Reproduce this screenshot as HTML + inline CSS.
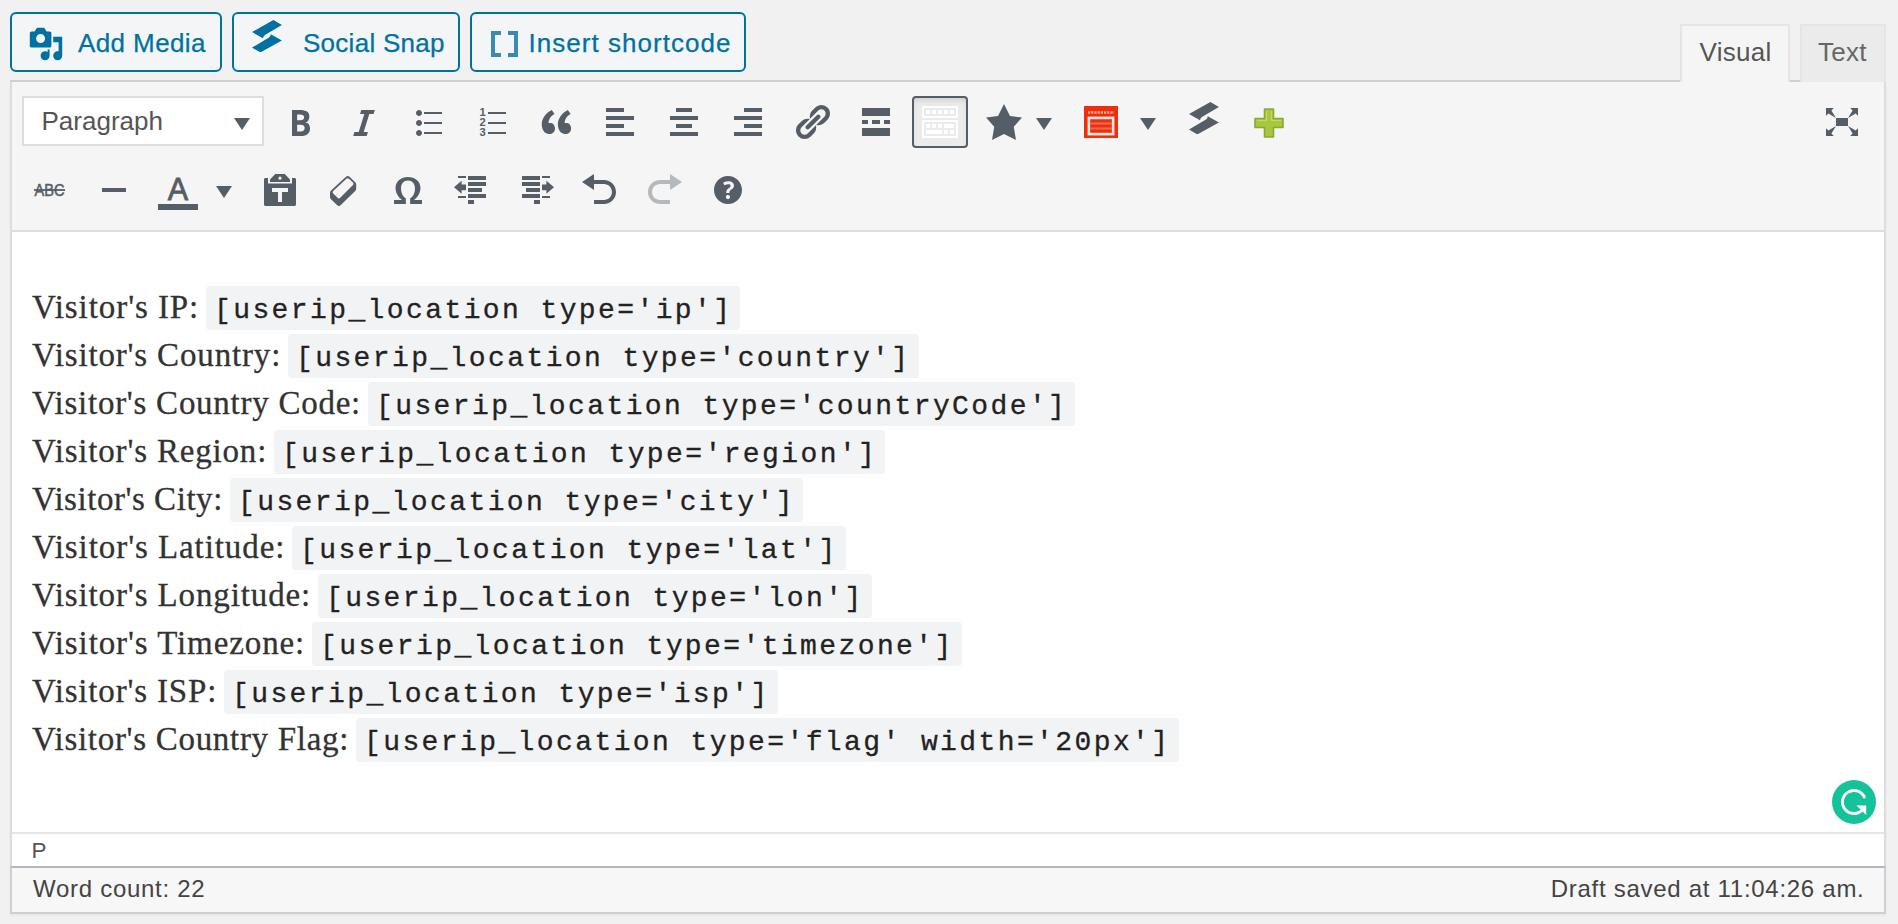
<!DOCTYPE html>
<html lang="en">
<head>
<meta charset="utf-8">
<title>Edit Post</title>
<style>
*{box-sizing:border-box;margin:0;padding:0}
html,body{width:1898px;height:924px;overflow:hidden;background:#f1f1f1;font-family:"Liberation Sans",sans-serif;color:#444}
.abs{position:absolute}
/* media buttons */
.mbtn{position:absolute;top:12px;height:60px;border:2px solid #0071a1;border-radius:6px;background:#f3f5f6;color:#0071a1;font-size:26px;line-height:56px;white-space:nowrap}
.mbtn span{position:absolute;top:0;-webkit-text-stroke:.25px #0071a1}
.mbtn svg{position:absolute}
/* tabs */
.tab{position:absolute;top:24px;height:58px;border:2px solid #e5e5e5;border-bottom:none;font-size:26px;line-height:53px;white-space:nowrap}
.tab span{position:absolute;top:0}
/* editor container */
#tools-line{position:absolute;left:10px;top:80px;width:1876px;height:2px;background:#ccd0d4}
#container{position:absolute;left:10px;top:82px;width:1876px;height:786px;border-left:2px solid #ddd;border-right:2px solid #ddd;background:#fff;box-shadow:0 2px 2px rgba(0,0,0,.04)}
#toolbar{position:absolute;left:0;top:0;width:1872px;height:150px;background:#f5f5f5;border-bottom:2px solid #ddd}
.ico{position:absolute;width:40px;height:40px;fill:#555d66}
.active{position:absolute;width:56px;height:52px;border:2px solid #555d66;border-radius:4px;background:#ebebeb;box-shadow:inset 0 4px 10px -6px rgba(0,0,0,.3)}
.caret{position:absolute;width:0;height:0;border-left:8px solid transparent;border-right:8px solid transparent;border-top:12px solid #555d66}
#fmt{position:absolute;left:10px;top:14px;width:242px;height:50px;border:2px solid #ddd;background:#fff}
#fmt span{position:absolute;left:17.5px;top:0;font-size:26px;line-height:46px;color:#555;white-space:nowrap}
#content{position:absolute;left:0;top:150px;width:1872px;height:600px;background:#fff;font-family:"Liberation Serif",serif;color:#333}
.ln{position:absolute;left:20px;height:48px;line-height:48px;white-space:nowrap;font-size:33px}
.ln .lbl{-webkit-text-stroke:.3px #333;display:inline-block;vertical-align:top;height:48px;position:relative;top:-1px}
.ln code{position:absolute;top:2px;height:44px;line-height:49.4px;background:#f2f3f4;border-radius:4px;padding:0 8px;font-family:"Liberation Mono",monospace;font-size:28px;letter-spacing:2.4px;color:#222;-webkit-text-stroke:.3px #222}
#path{position:absolute;left:0;top:750px;width:1872px;height:34px;border-top:2px solid #e5e5e5;background:#fff;font-size:24px;color:#555}
#status{position:absolute;left:10px;top:866px;width:1876px;height:48px;border:2px solid #ccd0d4;border-top:2px solid #b2b8bd;background:#f7f7f7;font-size:24px;color:#444;box-shadow:0 2px 2px rgba(0,0,0,.04)}
#status span{position:absolute;top:0;line-height:42.5px;white-space:nowrap}
</style>
</head>
<body>
<!-- MEDIA BUTTONS -->
<div class="mbtn" style="left:10px;width:212px" id="b1"><svg style="left:16.2px;top:12px;width:36px;height:36px;fill:#0071a1" viewBox="0 0 20 20"><path d="M13 11V4c0-.55-.45-1-1-1h-1.670L9 1H5L3.670 3H2c-.55 0-1 .45-1 1v7c0 .55.45 1 1 1h10c.55 0 1-.45 1-1zM7 4.500c1.380 0 2.500 1.120 2.500 2.500S8.380 9.500 7 9.500 4.500 8.380 4.500 7 5.620 4.500 7 4.500zM14 6h5v10.500c0 1.380-1.120 2.500-2.500 2.500S14 17.880 14 16.500s1.120-2.500 2.500-2.500c.17 0 .34.020.5.050V9h-3V6zM12 13v3.500c0 1.380-1.120 2.500-2.500 2.500S7 17.880 7 16.500 8.120 14 9.500 14c.5 0 1 .15 1.400.420V13z"/></svg><span style="left:66px;top:1px;letter-spacing:.4px">Add Media</span></div>
<div class="mbtn" style="left:232px;width:228px" id="b2"><svg style="left:18.4px;top:5.7px;width:30px;height:32.4px;fill:#0071a1" viewBox="0 0 30 32.400"><path d="M21.400 0L29.900 4.900 12.900 15Q11.300 16 11 18.200L0 12.050zM0 27.600L17 17.500Q18.600 16.500 18.800 14.300L29.900 20.500 8.400 32.400z"/></svg><span style="left:69px;top:1px;letter-spacing:.27px">Social Snap</span></div>
<div class="mbtn" style="left:470px;width:276px" id="b3"><svg style="left:19px;top:17px;width:27px;height:26px;fill:#3a8bb3" viewBox="0 0 27 26"><path d="M0 0h10v4H4v18h6v4H0zM27 0H17v4h6v18h-6v4h10z"/></svg><span style="left:56.5px;top:1px;letter-spacing:1.03px">Insert shortcode</span></div>
<!-- TABS -->
<div id="tools-line"></div>
<div class="tab" style="left:1800px;width:86px;background:#ebebeb;color:#666" id="t2"><span style="left:16px;letter-spacing:.3px">Text</span></div>
<div class="tab" style="left:1680px;width:110px;background:#f5f5f5;color:#555;z-index:3" id="t1"><span style="left:17.5px;letter-spacing:.3px">Visual</span></div>
<!-- EDITOR -->
<div id="container">
  <div id="toolbar">
    <div id="fmt"><span>Paragraph</span><i class="caret" style="left:210px;top:20px"></i></div>
    <svg class="ico" style="left:268px;top:20px" viewBox="0 0 20 20"><path d="M6 4v13h4.54c1.37 0 2.46-.33 3.26-1 .8-.66 1.2-1.58 1.2-2.77 0-.84-.17-1.51-.51-2.01s-.9-.85-1.67-1.03v-.09c.57-.1 1.02-.4 1.36-.9s.51-1.13.51-1.91c0-1.14-.39-1.98-1.17-2.5C12.75 4.26 11.5 4 9.78 4H6zm2.57 5.15V6.26h1.36c.73 0 1.27.11 1.61.32.34.22.51.58.51 1.07 0 .54-.16.92-.47 1.15s-.82.35-1.51.35h-1.5zm0 2.19h1.6c1.44 0 2.16.53 2.16 1.61 0 .6-.17 1.05-.51 1.34s-.86.43-1.57.43H8.57v-3.38z"/></svg>
    <svg class="ico" style="left:332px;top:20px" viewBox="0 0 20 20"><path d="M14.78 6h-2.13l-2.8 9h2.12l-.62 2H4.6l.62-2h2.14l2.8-9H8.03l.62-2h6.75z"/></svg>
    <svg class="ico" style="left:396px;top:20px" viewBox="0 0 20 20"><path d="M5.5 7C4.67 7 4 6.33 4 5.5 4 4.68 4.67 4 5.5 4 6.32 4 7 4.68 7 5.5 7 6.33 6.32 7 5.5 7zM8 5h9v1H8V5zm-2.5 7c-.83 0-1.5-.67-1.5-1.5C4 9.68 4.67 9 5.5 9c.82 0 1.5.68 1.5 1.5 0 .83-.68 1.5-1.5 1.5zM8 10h9v1H8v-1zm-2.5 7c-.83 0-1.5-.67-1.5-1.5 0-.82.67-1.5 1.5-1.5.82 0 1.5.68 1.5 1.5 0 .83-.68 1.5-1.5 1.5zM8 15h9v1H8v-1z"/></svg>
    <svg class="ico" style="left:460px;top:20px" viewBox="0 0 20 20"><path d="M8 5h9v1H8zM8 10h9v1H8zM8 15h9v1H8z"/><g font-family="Liberation Sans" font-weight="bold" font-size="5.6"><text x="3.7" y="7.05">1</text><text x="3.7" y="12.15">2</text><text x="3.7" y="17">3</text></g></svg>
    <svg class="ico" style="left:524px;top:20px" viewBox="0 0 20 20"><path d="M9.49 13.22c0-.74-.2-1.38-.61-1.9-.62-.78-1.83-.88-2.53-.72-.29-1.65 1.11-3.75 2.92-4.65L7.88 4c-2.73 1.3-5.42 4.28-4.96 8.05C3.21 14.43 4.59 16 6.54 16c.85 0 1.56-.25 2.12-.75s.83-1.18.83-2.03zm8.05 0c0-.74-.2-1.38-.61-1.9-.63-.78-1.83-.88-2.53-.72-.29-1.65 1.11-3.75 2.92-4.65L15.93 4c-2.73 1.3-5.41 4.28-4.95 8.05.29 2.38 1.66 3.95 3.61 3.95.85 0 1.56-.25 2.12-.75s.83-1.18.83-2.03z"/></svg>
    <svg class="ico" style="left:588px;top:20px" viewBox="0 0 20 20"><path d="M12 5V3H3v2h9zm5 4V7H3v2h14zm-5 4v-2H3v2h9zm5 4v-2H3v2h14z"/></svg>
    <svg class="ico" style="left:652px;top:20px" viewBox="0 0 20 20"><path d="M14 5V3H6v2h8zm3 4V7H3v2h14zm-3 4v-2H6v2h8zm3 4v-2H3v2h14z"/></svg>
    <svg class="ico" style="left:716px;top:20px" viewBox="0 0 20 20"><path d="M17 5V3H8v2h9zm0 4V7H3v2h14zm0 4v-2H8v2h9zm0 4v-2H3v2h14z"/></svg>
    <svg class="ico" style="left:780px;top:20px" viewBox="0 0 20 20"><path d="M17.74 2.76c1.68 1.69 1.68 4.41 0 6.1l-1.53 1.52c-1.12 1.12-2.7 1.47-4.14 1.09l2.62-2.61.76-.77.76-.76c.84-.84.84-2.2 0-3.04-.84-.85-2.2-.85-3.04 0l-.77.76-3.38 3.38c-.37-1.44-.02-3.02 1.1-4.14l1.52-1.53c1.69-1.68 4.42-1.68 6.1 0zM8.59 13.43l5.34-5.34c.42-.42.42-1.1 0-1.52-.44-.43-1.13-.39-1.53 0l-5.33 5.34c-.42.42-.42 1.1 0 1.52.44.43 1.13.39 1.52 0zm-.76 2.29l4.14-4.15c.38 1.44.03 3.02-1.09 4.14l-1.52 1.53c-1.69 1.68-4.41 1.68-6.1 0-1.68-1.68-1.68-4.42 0-6.1l1.53-1.52c1.12-1.12 2.7-1.47 4.14-1.1l-4.14 4.15c-.85.84-.85 2.2 0 3.05.84.84 2.2.84 3.04 0z"/></svg>
    <svg class="ico" style="left:844px;top:20px" viewBox="0 0 20 20"><path d="M17 7V3H3v4h14zM6 11V9H3v2h3zm6 0V9H8v2h4zm5 0V9h-3v2h3zm0 6v-4H3v4h14z"/></svg>
    <div class="active" style="left:900px;top:14px"></div>
    <svg class="ico" style="left:908px;top:20px" viewBox="0 0 20 20"><path fill="#fff" d="M19 2v6H1V2h18zm-1 5V3H2v4h16zM5 4v2H3V4h2zm3 0v2H6V4h2zm3 0v2H9V4h2zm3 0v2h-2V4h2zm3 0v2h-2V4h2zm2 5v9H1V9h18zm-1 8v-7H2v7h16zM5 11v2H3v-2h2zm3 0v2H6v-2h2zm3 0v2H9v-2h2zm6 0v2h-5v-2h5zm-6 3v2H3v-2h8zm3 0v2h-2v-2h2zm3 0v2h-2v-2h2z"/></svg>
    <svg class="ico" style="left:972px;top:20px" viewBox="0 0 20 20"><path d="M10 1l3 6 6 .75-4.12 4.62L16 19l-6-3-6 3 1.13-6.63L1 7.75 7 7z"/></svg>
    <i class="caret" style="left:1024px;top:36px"></i>
    <svg class="abs" style="left:1072px;top:24px;width:34px;height:32px" viewBox="0 0 34 32"><rect width="34" height="32" fill="#ee2f0d"/><path d="M4 6.500h26" stroke="#f8a595" stroke-width="2.400" stroke-dasharray="2.200 1"/><rect x="4.800" y="11.800" width="24.400" height="16.400" fill="#f36a50" stroke="#fce9e4" stroke-width="2.400"/><path d="M6.500 15.200h21M6.500 20h21M6.500 24.800h21" stroke="#ee2f0d" stroke-width="2.800"/></svg>
    <i class="caret" style="left:1128px;top:36px"></i>
    <svg class="abs" style="left:1176.6px;top:19.7px;width:30px;height:32.4px;fill:#555d66" viewBox="0 0 30 32.400"><path d="M21.400 0L29.900 4.900 12.900 15Q11.300 16 11 18.200L0 12.050zM0 27.600L17 17.500Q18.600 16.500 18.800 14.300L29.900 20.500 8.400 32.400z"/></svg>
    <svg class="abs" style="left:1242px;top:26px;width:30px;height:30px" viewBox="0 0 30 30"><path d="M10.500 1h9v9.500H29v9h-9.500V29h-9v-9.500H1v-9h9.500z" fill="#a8c73d" stroke="#89a92f" stroke-width="1.600" stroke-linejoin="round"/><path d="M12.500 3v9.500H3M17.500 3v9.500H27" fill="none" stroke="#c2da6a" stroke-width="1.200"/></svg>
    <svg class="ico" style="left:1810px;top:20px" viewBox="0 0 20 20"><path d="M7 8h6v4H7z"/><path d="M2 3h3.900L4.700 4.200 7 8 3.200 5.700 2 6.900z"/><path d="M2 3h3.900L4.700 4.200 7 8 3.200 5.700 2 6.900z" transform="translate(20 0) scale(-1 1)"/><path d="M2 3h3.900L4.700 4.200 7 8 3.200 5.700 2 6.900z" transform="translate(0 20) scale(1 -1)"/><path d="M2 3h3.900L4.700 4.200 7 8 3.200 5.700 2 6.900z" transform="translate(20 20) scale(-1 -1)"/></svg>
    <svg class="ico" style="left:18px;top:88px" viewBox="0 0 20 20"><text x="2.300" y="12.900" font-family="Liberation Sans" font-size="8.200" textLength="15" lengthAdjust="spacingAndGlyphs" stroke="#555d66" stroke-width=".25">ABC</text><rect x="2" y="9.550" width="15.500" height=".9"/></svg>
    <svg class="ico" style="left:82px;top:88px" viewBox="0 0 20 20"><path d="M4 9h12v2H4z"/></svg>
    <svg class="ico" style="left:146px;top:88px" viewBox="0 0 20 20"><text x="10" y="14.850" text-anchor="middle" font-family="Liberation Sans" font-size="15.300" stroke="#555d66" stroke-width=".4">A</text></svg>
    <svg class="ico" style="left:248px;top:88px" viewBox="0 0 20 20"><path fill-rule="evenodd" d="M2.700 4H4v2.700h12V4h1.300c.4 0 .7.300.7.700v12.600c0 .4-.3.700-.7.700H2.700c-.4 0-.7-.300-.7-.700V4.700c0-.4.300-.7.700-.7zM6 9v2h3v5h2v-5h3V9H6z"/><path fill-rule="evenodd" d="M7.600 2h4.800L15 4.800V6H5V4.800L7.600 2zM10 3.300a.8.800 0 100 1.600.8.800 0 000-1.600z"/></svg>
    <svg class="ico" style="left:312px;top:88px" viewBox="0 0 20 20"><path fill-rule="evenodd" d="M3 11.400Q3 10.800 3.500 10.300L11 3.400Q11.900 2.500 12.800 3.400L15.600 6.100Q16.100 6.600 16.100 7.200V9.400Q16.100 10 15.600 10.500L8.400 17.500Q7.400 18.400 6.500 17.500L3.500 14.600Q3 14.100 3 13.500zM4.600 10.500L11.200 4.400Q11.900 3.800 12.500 4.400L14.500 6.300Q15.100 6.900 14.500 7.500L8.100 13.900Q7.400 14.600 6.800 13.900L4.600 11.700Q4 11.100 4.600 10.500z"/></svg>
    <svg class="ico" style="left:376px;top:88px" viewBox="0 0 20 20"><path d="M3 17V15H7C5 13.400 3.760 11.400 3.760 8.900 3.760 5.700 6.500 3.460 10 3.460S16.240 5.700 16.240 8.900C16.240 11.400 15 13.400 13 15H17V17H11.080V14.300C12.600 13.200 13.500 11.400 13.500 9.200 13.500 6.800 12.100 5.200 10 5.200S6.500 6.800 6.500 9.200C6.500 11.400 7.400 13.200 8.920 14.300V17z"/></svg>
    <svg class="ico" style="left:440px;top:88px" viewBox="0 0 20 20"><path d="M8 3h9v2H8zM8 6h9v2H8zM8 9h7v2H8zM8 12h9v2H8zM8 15h3v2H8zM3 3h4v1H3zM3 13h4v1H3zM1 8.600L4.800 5.400v1.900H7v2.800H4.800v1.800z"/></svg>
    <svg class="ico" style="left:504px;top:88px" viewBox="0 0 20 20"><path d="M3 3h9v2H3zM3 6h9v2H3zM5 9h7v2H5zM3 12h9v2H3zM9 15h3v2H9zM13 3h4v1h-4zM13 13h4v1h-4zM19 8.600l-3.800-3.200v1.900H13v2.800h2.200v1.800z"/></svg>
    <svg class="ico" style="left:568px;top:88px" viewBox="0 0 20 20"><path d="M12 5H7V2L1 6l6 4V7h5c2.200 0 4 1.800 4 4s-1.800 4-4 4H7v2h5c3.300 0 6-2.700 6-6s-2.700-6-6-6z"/></svg>
    <svg class="ico" style="left:632px;top:88px" viewBox="0 0 20 20"><path fill="#b4b9be" d="M8 5h5V2l6 4-6 4V7H8c-2.200 0-4 1.800-4 4s1.800 4 4 4h5v2H8c-3.300 0-6-2.700-6-6s2.700-6 6-6z"/></svg>
    <svg class="ico" style="left:696px;top:88px" viewBox="0 0 20 20"><path d="M17 10c0-3.870-3.140-7-7-7-3.870 0-7 3.130-7 7s3.130 7 7 7c3.860 0 7-3.130 7-7zm-6.300 1.480H9.140v-.43c0-.38.080-.7.240-.98s.46-.57.880-.89c.41-.29.680-.53.810-.71.140-.18.200-.39.200-.62 0-.25-.09-.44-.28-.58-.19-.13-.45-.19-.79-.19-.58 0-1.250.19-2 .57l-.64-1.280c.87-.49 1.800-.74 2.770-.74.810 0 1.450.2 1.920.58.480.39.710.91.710 1.550 0 .43-.09.8-.29 1.110-.19.32-.56.67-1.110 1.060-.38.28-.61.49-.71.630-.1.150-.15.340-.15.570v.35zm-1.470 2.740c-.18-.17-.27-.42-.27-.73 0-.33.080-.58.260-.75s.43-.25.770-.25c.32 0 .57.090.75.260s.27.420.27.740c0 .3-.09.55-.27.720-.18.180-.43.270-.75.270-.33 0-.58-.09-.76-.26z"/></svg>
    <div class="abs" style="left:146px;top:122px;width:40px;height:6px;background:#555d66"></div>
    <i class="caret" style="left:204px;top:104px"></i>
  </div>
  <div id="content">
    <p class="ln" style="top:52px"><span class="lbl" style="letter-spacing:0.92px">Visitor's IP:</span> <code style="left:174px">[userip_location type='ip']</code></p>
    <p class="ln" style="top:100px"><span class="lbl" style="letter-spacing:0.84px">Visitor's Country:</span> <code style="left:256px">[userip_location type='country']</code></p>
    <p class="ln" style="top:148px"><span class="lbl" style="letter-spacing:0.74px">Visitor's Country Code:</span> <code style="left:336px">[userip_location type='countryCode']</code></p>
    <p class="ln" style="top:196px"><span class="lbl" style="letter-spacing:0.82px">Visitor's Region:</span> <code style="left:242px">[userip_location type='region']</code></p>
    <p class="ln" style="top:244px"><span class="lbl" style="letter-spacing:0.54px">Visitor's City:</span> <code style="left:198px">[userip_location type='city']</code></p>
    <p class="ln" style="top:292px"><span class="lbl" style="letter-spacing:0.92px">Visitor's Latitude:</span> <code style="left:260px">[userip_location type='lat']</code></p>
    <p class="ln" style="top:340px"><span class="lbl" style="letter-spacing:0.88px">Visitor's Longitude:</span> <code style="left:286px">[userip_location type='lon']</code></p>
    <p class="ln" style="top:388px"><span class="lbl" style="letter-spacing:0.9px">Visitor's Timezone:</span> <code style="left:280px">[userip_location type='timezone']</code></p>
    <p class="ln" style="top:436px"><span class="lbl" style="letter-spacing:0.83px">Visitor's ISP:</span> <code style="left:192px">[userip_location type='isp']</code></p>
    <p class="ln" style="top:484px"><span class="lbl" style="letter-spacing:0.7px">Visitor's Country Flag:</span> <code style="left:324px">[userip_location type='flag' width='20px']</code></p>
    <svg class="abs" id="gram" style="left:1820px;top:548px;width:44px;height:44px" viewBox="0 0 44 44"><circle cx="22" cy="22" r="22" fill="#15c39a"/><path d="M32.300 17A11.500 11.500 0 1 0 30.400 29.800" fill="none" stroke="#fff" stroke-width="2.900" stroke-linecap="round"/><path d="M24.500 25.400H34.200V34.900z" fill="#fff"/></svg>
  </div>
  <div id="path"><span class="abs" style="left:19.5px;top:3px;line-height:28px;font-size:22.5px">P</span></div>
</div>
<div id="status"><span style="left:21px;letter-spacing:.72px" id="wc">Word count: 22</span><span style="right:19.5px;letter-spacing:.72px" id="ds">Draft saved at 11:04:26 am.</span></div>
</body>
</html>
